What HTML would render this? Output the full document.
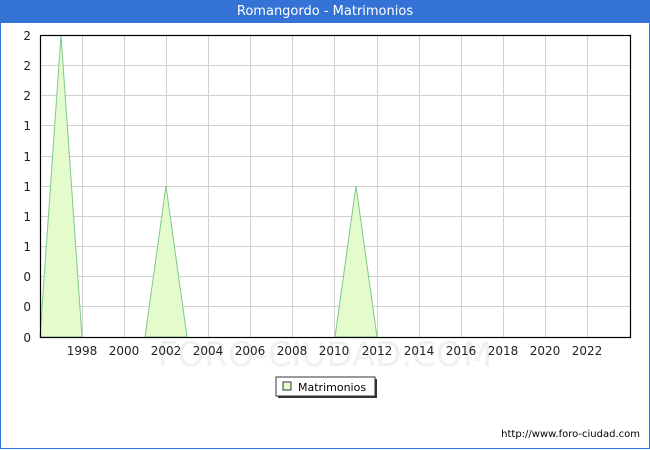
<!DOCTYPE html>
<html><head><style>
body{margin:0;width:650px;height:450px;overflow:hidden;font-family:"DejaVu Sans","Liberation Sans",sans-serif;}
.frame{position:absolute;left:0;top:0;width:648px;height:448px;border:1px solid #3473d5;border-top:none;background:#fff}
.title{position:absolute;left:0;top:0;width:650px;height:23px;background:#3473d5;color:#fff;font-size:13px;line-height:23px;text-align:center}
</style></head><body>
<div class="frame"></div>
<div class="title">Romangordo - Matrimonios</div>
<svg width="650" height="450" style="position:absolute;left:0;top:0" font-family="DejaVu Sans, Liberation Sans, sans-serif">
<text x="325" y="366" font-size="34" fill="#f0f0f0" text-anchor="middle">FORO-CIUDAD.COM</text>
<g stroke="#d0d0d0" stroke-width="1">
<line x1="40" y1="65.5" x2="630" y2="65.5"/><line x1="40" y1="95.5" x2="630" y2="95.5"/><line x1="40" y1="125.5" x2="630" y2="125.5"/><line x1="40" y1="156.5" x2="630" y2="156.5"/><line x1="40" y1="186.5" x2="630" y2="186.5"/><line x1="40" y1="216.5" x2="630" y2="216.5"/><line x1="40" y1="246.5" x2="630" y2="246.5"/><line x1="40" y1="276.5" x2="630" y2="276.5"/><line x1="40" y1="306.5" x2="630" y2="306.5"/>
<line x1="82.5" y1="35" x2="82.5" y2="337"/><line x1="124.5" y1="35" x2="124.5" y2="337"/><line x1="166.5" y1="35" x2="166.5" y2="337"/><line x1="208.5" y1="35" x2="208.5" y2="337"/><line x1="250.5" y1="35" x2="250.5" y2="337"/><line x1="292.5" y1="35" x2="292.5" y2="337"/><line x1="334.5" y1="35" x2="334.5" y2="337"/><line x1="377.5" y1="35" x2="377.5" y2="337"/><line x1="419.5" y1="35" x2="419.5" y2="337"/><line x1="461.5" y1="35" x2="461.5" y2="337"/><line x1="503.5" y1="35" x2="503.5" y2="337"/><line x1="545.5" y1="35" x2="545.5" y2="337"/><line x1="587.5" y1="35" x2="587.5" y2="337"/>
</g>
<g fill="#e4fccc" stroke="#7ec98e" stroke-width="1">
<polygon points="40,337 61,35 82,337"/>
<polygon points="145,337 166,186 187,337"/>
<polygon points="335,337 356,186 377,337"/>
</g>
<rect x="40.5" y="35.5" width="590" height="302" fill="none" stroke="#000" stroke-width="1.2"/>
<g font-size="12" fill="#222" text-anchor="end">
<text x="31" y="40">2</text><text x="31" y="70">2</text><text x="31" y="100">2</text><text x="31" y="130">1</text><text x="31" y="161">1</text><text x="31" y="191">1</text><text x="31" y="221">1</text><text x="31" y="251">1</text><text x="31" y="281">0</text><text x="31" y="311">0</text><text x="31" y="342">0</text>
</g>
<g font-size="12" fill="#222" text-anchor="middle">
<text x="82" y="355">1998</text><text x="124" y="355">2000</text><text x="166" y="355">2002</text><text x="208" y="355">2004</text><text x="250" y="355">2006</text><text x="292" y="355">2008</text><text x="334" y="355">2010</text><text x="377" y="355">2012</text><text x="419" y="355">2014</text><text x="461" y="355">2016</text><text x="503" y="355">2018</text><text x="545" y="355">2020</text><text x="587" y="355">2022</text>
</g>
<rect x="278" y="379" width="99" height="19" fill="#333"/>
<rect x="276" y="377" width="99" height="19" fill="#fff" stroke="#333" stroke-width="1"/>
<rect x="283" y="382" width="8" height="8" fill="#e4fccc" stroke="#333" stroke-width="1"/>
<text x="298" y="391" font-size="11" fill="#000">Matrimonios</text>
<text x="640" y="437" font-size="10" fill="#000" text-anchor="end">http://www.foro-ciudad.com</text>
</svg>
</body></html>
